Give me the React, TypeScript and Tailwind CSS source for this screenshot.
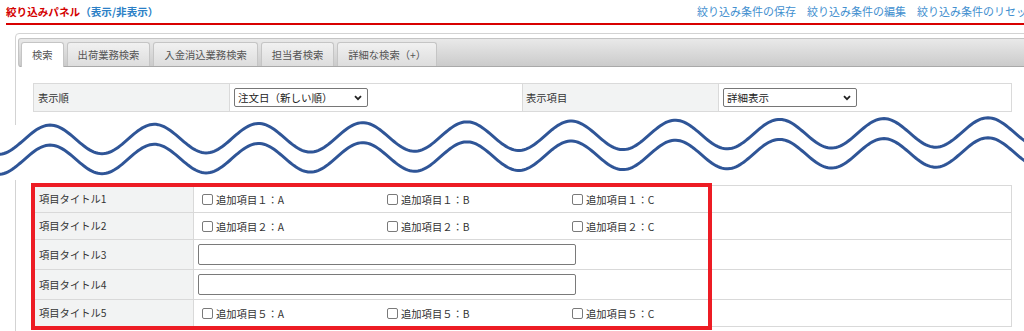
import React from "react";

const tabs = ["検索", "出荷業務検索", "入金消込業務検索", "担当者検索", "詳細な検索（+）"];

// wave drawn across the cut between the two tables
function wavePoints(offset: number) {
  const pts: string[] = [];
  for (let x = -10; x <= 1040; x += 2) {
    const c = 140 - (8 * x) / 1024 + offset;
    const y = c - 14.5 * Math.cos((2 * Math.PI * (x - 50)) / 104.2);
    pts.push(`${x},${y.toFixed(2)}`);
  }
  return pts.join(" ");
}

function Select({ value }: { value: string }) {
  return (
    <div className="relative w-[134px] h-[19px] border border-[#767676] rounded-[2px] bg-white flex items-center pl-[3px] text-[10.5px] text-[#222]">
      <span>{value}</span>
      <svg className="absolute right-[5px] top-[6px]" width="8" height="6" viewBox="0 0 8 6">
        <path d="M1 1.2 L4 4.2 L7 1.2" fill="none" stroke="#222" strokeWidth="1.8" />
      </svg>
    </div>
  );
}

function Check({ label }: { label: string }) {
  return (
    <label className="w-[185px] flex items-center">
      <span className="ml-[4px] w-[11px] h-[11px] border border-[#7a7a7a] rounded-[2px] bg-white" />
      <span className="ml-[3px] translate-y-[1px]">{label}</span>
    </label>
  );
}

function Row({ title, h, children }: { title: string; h: string; children: React.ReactNode }) {
  return (
    <div className={`flex border-b border-[#d9d9d9] ${h}`}>
      <div className="w-[159px] bg-[#f2f3f3] pl-[5px] flex items-center">{title}</div>
      <div className="flex-1 border-l border-[#d9d9d9] pl-[4px] flex items-center">{children}</div>
    </div>
  );
}

export default function App() {
  return (
    <div className="relative w-[1024px] h-[331px] overflow-hidden bg-white text-[#333] font-['Noto_Sans_CJK_JP','Noto_Sans',sans-serif]">
      <div className="w-[1040px]">
        {/* header */}
        <div className="ml-[6px] w-[1032px] h-[25px] flex items-center border-b-2 border-[#d80000]">
          <div className="text-[10.6px] font-bold text-[#d40000]">
            絞り込みパネル<span className="text-[#2b7fc6]">（表示/非表示）</span>
          </div>
          <div className="ml-auto flex gap-[11px] text-[11px] text-[#3f8fcf]">
            <span>絞り込み条件の保存</span>
            <span>絞り込み条件の編集</span>
            <span>絞り込み条件のリセット</span>
          </div>
        </div>

        {/* panel */}
        <div className="ml-[15px] mt-[8px] w-[1016px] h-[400px] border border-[#d3d3d3] rounded-[4px] pt-[4px]">
          <div className="mx-[2px] h-[29px] border border-[#c4c4c4] border-b-[#a9a9a9] rounded-[3px] bg-linear-to-b from-[#e9e9e9] to-[#cbcbcb] flex items-end gap-[3px] pl-[2px]">
            {tabs.map((t, i) => (
              <div
                key={t}
                className={
                  i === 0
                    ? "h-[25px] -mb-px px-[10px] flex items-center border border-b-0 border-[#c5c5c5] rounded-t-[3px] bg-white text-[10.3px] text-[#555]"
                    : "h-[24px] px-[10px] flex items-center border border-b-0 border-[#c5c5c5] rounded-t-[3px] bg-linear-to-b from-[#f1f1f1] to-[#dddddd] text-[10.3px] text-[#555]"
                }
              >
                {t}
              </div>
            ))}
          </div>

          {/* sort / display row */}
          <div className="ml-[17px] mt-[16px] w-[979px] h-[29px] flex border border-[#dadada] text-[10.3px]">
            <div className="w-[195px] bg-[#f2f3f3] pl-[4px] flex items-center">表示順</div>
            <div className="w-[293px] border-l border-[#dadada] pl-[4px] flex items-center">
              <Select value="注文日（新しい順）" />
            </div>
            <div className="w-[196px] border-l border-[#dadada] bg-[#f2f3f3] pl-[3px] flex items-center">表示項目</div>
            <div className="w-[293px] border-l border-[#dadada] pl-[4px] flex items-center">
              <Select value="詳細表示" />
            </div>
          </div>

          {/* item table */}
          <div className="relative ml-[17px] mt-[73px] w-[979px]">
            <div className="border border-b-0 border-[#d9d9d9] text-[10.3px]">
              <Row title="項目タイトル1" h="h-[27px]">
                <Check label="追加項目１：A" />
                <Check label="追加項目１：B" />
                <Check label="追加項目１：C" />
              </Row>
              <Row title="項目タイトル2" h="h-[27px]">
                <Check label="追加項目２：A" />
                <Check label="追加項目２：B" />
                <Check label="追加項目２：C" />
              </Row>
              <Row title="項目タイトル3" h="h-[30px]">
                <input className="w-[378px] h-[21px] border border-[#7a7a7a] rounded-[2px] bg-white" />
              </Row>
              <Row title="項目タイトル4" h="h-[30px]">
                <input className="w-[378px] h-[21px] border border-[#7a7a7a] rounded-[2px] bg-white" />
              </Row>
              <Row title="項目タイトル5" h="h-[27px]">
                <Check label="追加項目５：A" />
                <Check label="追加項目５：B" />
                <Check label="追加項目５：C" />
              </Row>
            </div>
            <div className="absolute -left-[2px] -top-[2px] w-[681px] h-[147px] border-4 border-[#ed1c24]" />
          </div>
        </div>
      </div>

      {/* cut marker */}
      <svg className="absolute left-0 top-0 pointer-events-none" width="1024" height="331" viewBox="0 0 1024 331">
        <rect x="0" y="125" width="1024" height="55" fill="#fff" />
        <polyline points={wavePoints(0)} fill="none" stroke="#2f5597" strokeWidth="3" />
        <polyline points={wavePoints(20)} fill="none" stroke="#2f5597" strokeWidth="3" />
      </svg>
    </div>
  );
}
